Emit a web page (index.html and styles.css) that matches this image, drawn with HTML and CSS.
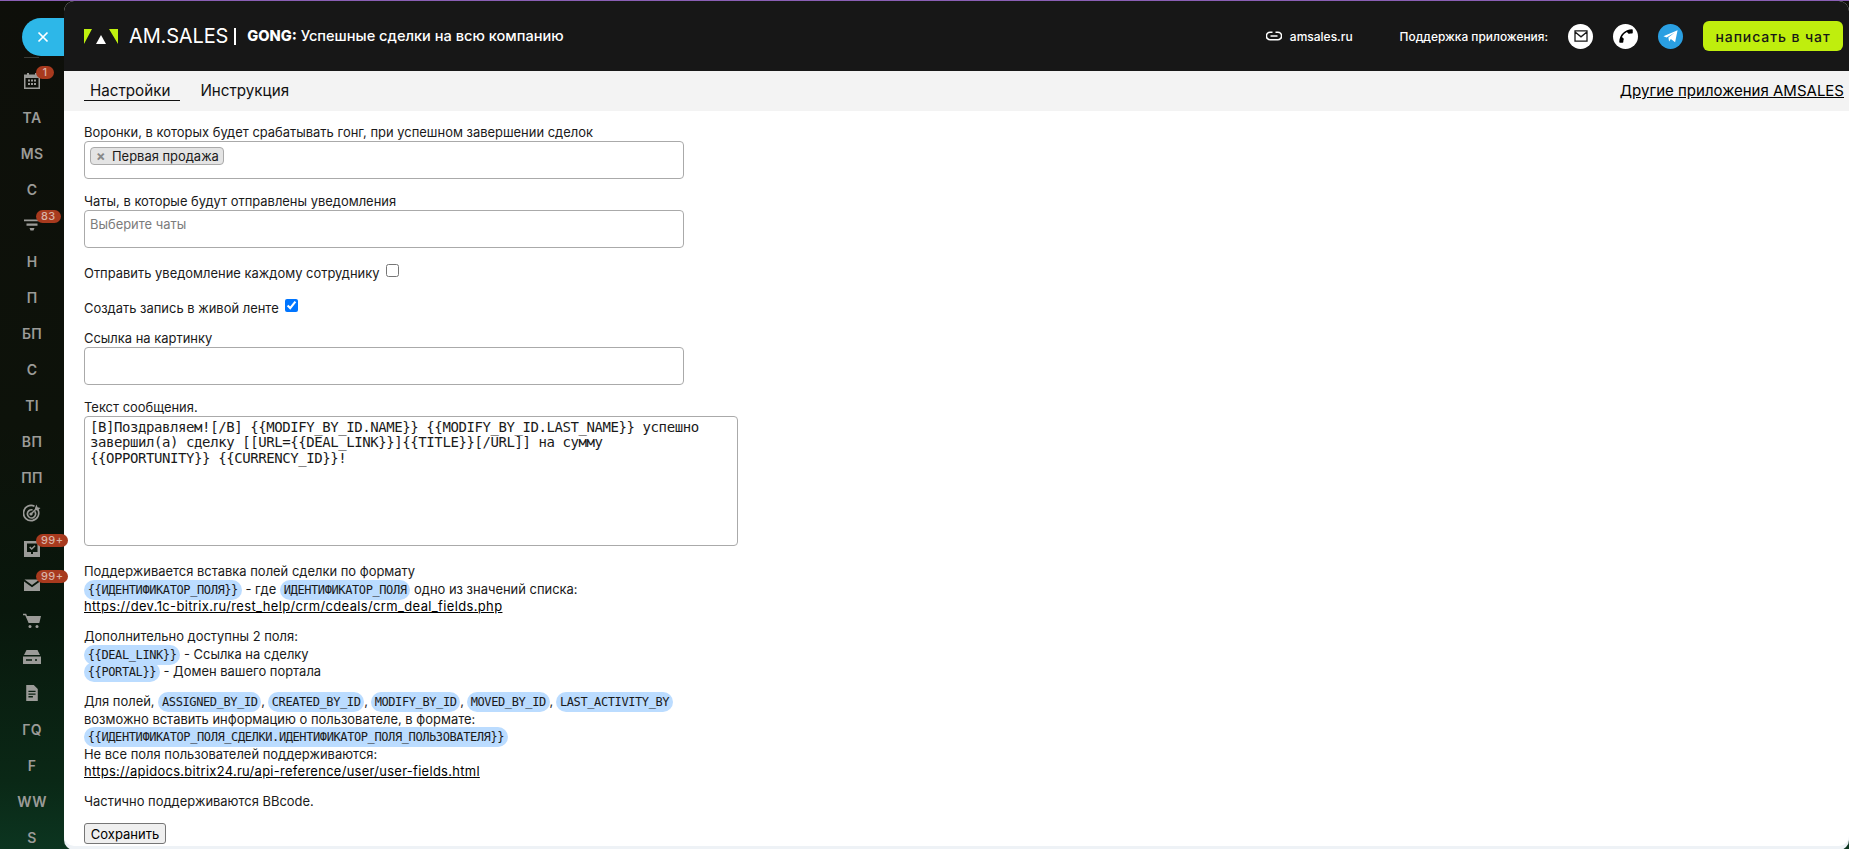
FILE: index.html
```html
<!DOCTYPE html>
<html lang="ru">
<head>
<meta charset="utf-8">
<title>AM.SALES GONG</title>
<link rel="stylesheet" href="styles.css">
</head>
<body>
<aside class="sidebar">
  <button class="close-btn" type="button" aria-label="Закрыть"><svg class="close-icon" viewBox="0 0 12 12"><path d="M1.500 1.500l9 9M10.500 1.500l-9 9"/></svg></button>
  <div class="side-divider"></div>
  <ul class="side-list">
    <li class="side-item"><svg class="side-icon" viewBox="0 0 16 16"><path fill-rule="evenodd" d="M3 0h2v1.500h6V0h2v1.500h3V16H0V1.500h3zM1.500 5v9.500h13V5zM4 6.500h2v2H4zM7 6.500h2v2H7zM10 6.500h2v2h-2zM4 10h2v2H4zM7 10h2v2H7zM10 10h2v2h-2z"/></svg><span class="badge">1</span></li>
    <li class="side-item">TA</li>
    <li class="side-item">MS</li>
    <li class="side-item">C</li>
    <li class="side-item"><svg class="side-icon" viewBox="0 0 16 16"><path d="M0 2.500h16v1.800H0zM2.500 6.500h11v2.200h-11zM5.500 11h5l-1 2.500h-3z"/></svg><span class="badge">83</span></li>
    <li class="side-item">Н</li>
    <li class="side-item">П</li>
    <li class="side-item">БП</li>
    <li class="side-item">С</li>
    <li class="side-item">TI</li>
    <li class="side-item">ВП</li>
    <li class="side-item">ПП</li>
    <li class="side-item"><svg class="side-icon side-icon-target" viewBox="0 0 18 18"><path fill="none" stroke-width="1.700" d="M14.800 5.500A7.600 7.600 0 1 1 11.500 2.300M11.600 7.200a4.100 4.100 0 1 1-2.100-1.300"/><circle cx="8" cy="10" r="1.600"/><path fill="none" stroke-width="1.500" d="M8 10l5-5"/><path d="M12 4l1.500-3.500 1 2.800 3 .7-3 2.500-2.500-.5z"/></svg></li>
    <li class="side-item"><svg class="side-icon" viewBox="0 0 16 16"><path fill-rule="evenodd" d="M0 0h16v16H0zM3 2.500V11h4v2h2v-2h4.500V2.500z"/><path d="M5.200 6.600l1-1 1.500 1.500 2.800-2.800 1 1-3.800 3.800z"/></svg><span class="badge">99+</span></li>
    <li class="side-item"><svg class="side-icon" viewBox="0 0 16 16"><path d="M.5 2.500h15L8 8zM0 4.500l8 5.800 8-5.800V14H0z"/></svg><span class="badge">99+</span></li>
    <li class="side-item"><svg class="side-icon side-icon-cart" viewBox="0 0 18 16"><path d="M0 .8h3.200l.8 2.200H18l-1.700 7H5.600L2.200 2.300H0z"/><circle cx="7" cy="13.500" r="1.500"/><circle cx="14" cy="13.500" r="1.500"/></svg></li>
    <li class="side-item"><svg class="side-icon side-icon-drive" viewBox="0 0 18 14"><path fill-rule="evenodd" d="M3.500 0h11L17 5H1zM0 6.500h18V14H0zM3 9.200v1.600h6V9.200zM12 9.200v1.600h2V9.200z"/></svg></li>
    <li class="side-item"><svg class="side-icon" viewBox="0 0 16 18"><path fill-rule="evenodd" d="M1.500 0H10l4.500 4.500V18h-13zM4 6.500V8h8V6.500zM4 9.500V11h8V9.500zM4 12.500V14h5v-1.500z"/></svg></li>
    <li class="side-item">ГQ</li>
    <li class="side-item">F</li>
    <li class="side-item">WW</li>
    <li class="side-item">S</li>
  </ul>
</aside>
<main class="panel">
  <header class="topbar">
    <div class="brand">
      <svg class="logo" viewBox="0 0 34 15"><path class="logo-lime" d="M0 0h8L0 15zM25 0h9v15z"/><path class="logo-white" d="M17 6l5 9H12z"/></svg>
      <span class="brand-name">AM.SALES</span>
      <span class="brand-sep"></span>
      <span class="brand-title"><b>GONG:</b> Успешные сделки на всю компанию</span>
    </div>
    <div class="top-actions">
      <a class="site-link"><svg class="link-icon" viewBox="0 0 16 10"><path d="M6.500 1.200H4.200a3.800 3.800 0 0 0 0 7.600h7.600a3.800 3.800 0 0 0 0-7.600H9.500M4.500 5h7"/></svg>amsales.ru</a>
      <span class="support-label">Поддержка приложения:</span>
      <span class="round-icon"><svg viewBox="0 0 16 14" class="mail-icon"><path d="M1 1h14v12H1zM1.500 2.500L8 8l6.500-5.500"/></svg></span>
      <span class="round-icon"><svg viewBox="0 0 24 24" class="phone-icon"><path transform="rotate(90 12 12)" d="M6.600 10.800c1.400 2.800 3.800 5.100 6.600 6.600l2.200-2.200c.3-.3.700-.4 1-.2 1.100.4 2.300.6 3.600.6.600 0 1 .4 1 1V20c0 .6-.4 1-1 1C10.600 21 3 13.400 3 4c0-.6.4-1 1-1h3.500c.6 0 1 .4 1 1 0 1.300.2 2.500.6 3.600.1.300 0 .7-.2 1z"/></svg></span>
      <span class="round-icon round-icon-tg"><svg viewBox="0 0 24 24" class="tg-icon"><path d="M2 11.500L22 3l-3.500 17-6-4.500-2.500 3.500-1-5.500L18 6.500 6.500 13.500z"/></svg></span>
      <button class="chat-btn" type="button">написать в чат</button>
    </div>
  </header>
  <nav class="tabs">
    <div class="tab-group">
      <a class="tab tab-active">Настройки</a>
      <a class="tab">Инструкция</a>
    </div>
    <a class="other-apps">Другие приложения AMSALES</a>
  </nav>
  <form class="content">
    <div class="field">
      <label class="label">Воронки, в которых будет срабатывать гонг, при успешном завершении сделок</label>
      <div class="select-box"><span class="tag"><span class="tag-x">×</span>Первая продажа</span></div>
    </div>
    <div class="field">
      <label class="label">Чаты, в которые будут отправлены уведомления</label>
      <div class="select-box"><span class="placeholder">Выберите чаты</span></div>
    </div>
    <label class="check-row">Отправить уведомление каждому сотруднику <input class="check" type="checkbox"></label>
    <label class="check-row check-row-last">Создать запись в живой ленте <input class="check" type="checkbox" checked></label>
    <div class="field">
      <label class="label">Ссылка на картинку</label>
      <input class="text-input" type="text">
    </div>
    <div class="field">
      <label class="label">Текст сообщения.</label>
      <textarea class="message" spellcheck="false">[B]Поздравляем![/B] {{MODIFY_BY_ID.NAME}} {{MODIFY_BY_ID.LAST_NAME}} успешно завершил(а) сделку [[URL={{DEAL_LINK}}]{{TITLE}}[/URL]] на сумму {{OPPORTUNITY}} {{CURRENCY_ID}}!</textarea>
    </div>
    <div class="help">
      <p>Поддерживается вставка полей сделки по формату<br>
      <code>{{ИДЕНТИФИКАТОР_ПОЛЯ}}</code> - где <code>ИДЕНТИФИКАТОР_ПОЛЯ</code> одно из значений списка:<br>
      <a class="doc-link doc-link-wide">https://dev.1c-bitrix.ru/rest_help/crm/cdeals/crm_deal_fields.php</a></p>
      <p>Дополнительно доступны 2 поля:<br>
      <code>{{DEAL_LINK}}</code> - Ссылка на сделку<br>
      <code>{{PORTAL}}</code> - Домен вашего портала</p>
      <p>Для полей, <code>ASSIGNED_BY_ID</code><span class="comma">, </span><code>CREATED_BY_ID</code><span class="comma">, </span><code>MODIFY_BY_ID</code><span class="comma">, </span><code>MOVED_BY_ID</code><span class="comma">, </span><code>LAST_ACTIVITY_BY</code><br>
      возможно вставить информацию о пользователе, в формате:<br>
      <code>{{ИДЕНТИФИКАТОР_ПОЛЯ_СДЕЛКИ.ИДЕНТИФИКАТОР_ПОЛЯ_ПОЛЬЗОВАТЕЛЯ}}</code><br>
      Не все поля пользователей поддерживаются:<br>
      <a class="doc-link">https://apidocs.bitrix24.ru/api-reference/user/user-fields.html</a></p>
      <p>Частично поддерживаются BBcode.</p>
    </div>
    <button class="save-btn" type="button">Сохранить</button>
  </form>
</main>
</body>
</html>
```
FILE: styles.css
```css
* { box-sizing: border-box; }
html, body { height: 100%; }
body {
  margin: 0;
  height: 849px;
  overflow: hidden;
  display: flex;
  border-top: 1px solid #8a5fb5;
  background: linear-gradient(180deg, #0e0f0a 0%, #0d120a 50%, #09170c 72%, #0a2816 92%, #0c3520 100%);
  font-family: Inter, "Noto Sans", sans-serif;
  font-size: 12.950px;
  color: #1a1a1a;
}
.sidebar {
  width: 64px;
  flex: none;
  padding-top: 17px;
}
.close-btn {
  display: flex;
  align-items: center;
  justify-content: center;
  width: 42px;
  height: 38px;
  margin-left: 22px;
  padding: 0;
  border: 0;
  border-radius: 19px 0 0 19px;
  background: #2db7e8;
}
.close-icon { width: 12px; height: 12px; fill: none; stroke: #fff; stroke-width: 1.700; }
.side-divider { width: 15px; height: 1px; margin: 1px 0 0 24px; background: #3a3a34; }
.side-list { list-style: none; margin: 5px 0 0; padding: 0; }
.side-item {
  position: relative;
  display: flex;
  align-items: center;
  justify-content: center;
  height: 36px;
  color: #9b9b98;
  font-size: 14px;
  font-weight: 600;
  letter-spacing: .3px;
}
.side-icon { width: 16px; height: 16px; fill: #9b9b98; stroke: #9b9b98; stroke-width: 0; }
.side-icon-target { width: 18px; height: 18px; }
.side-icon-cart { width: 18px; height: 16px; }
.side-icon-drive { width: 18px; height: 14px; }
.side-icon-target path[fill="none"] { stroke: #9b9b98; }
.badge {
  position: absolute;
  left: 36px;
  top: 3px;
  min-width: 18px;
  height: 13px;
  padding: 0 5px;
  border-radius: 7px;
  background: #a83a1e;
  color: #d9b4a8;
  font-size: 11px;
  font-weight: 500;
  line-height: 13px;
  text-align: center;
  letter-spacing: .4px;
}
.panel {
  flex: 1;
  min-width: 0;
  height: 845px;
  display: flex;
  flex-direction: column;
  background: #fff;
  border-radius: 10px;
  box-shadow: 0 4px 0 #eef2f6;
  overflow: hidden;
}
.topbar {
  display: flex;
  flex: none;
  align-items: center;
  justify-content: space-between;
  height: 70px;
  padding: 0 6px 0 20px;
  background: #171717;
  color: #fff;
}
.brand { display: flex; align-items: center; }
.logo { width: 34px; height: 15px; margin-right: 11px; }
.logo-lime { fill: #bff00f; }
.logo-white { fill: #fff; }
.brand-name { font-size: 20px; font-weight: 400; line-height: 24px; letter-spacing: -.15px; }
.brand-sep { width: 2px; height: 17px; margin: 0 11px 0 6px; background: #fff; }
.brand-title { font-size: 14.600px; font-weight: 500; }
.brand-title b { font-weight: 800; }
.top-actions { display: flex; align-items: center; }
.site-link { display: flex; align-items: center; font-size: 12px; font-weight: 500; margin-right: 47px; }
.link-icon { width: 16px; height: 10px; margin-right: 8px; fill: none; stroke: #fff; stroke-width: 1.600; }
.support-label { font-size: 11.900px; font-weight: 500; margin-right: 20px; }
.round-icon {
  display: flex;
  align-items: center;
  justify-content: center;
  width: 25px;
  height: 25px;
  margin-right: 20px;
  border-radius: 50%;
  background: #fff;
}
.round-icon-tg { background: #2a9fe2; }
.mail-icon { width: 14px; height: 12px; fill: none; stroke: #171717; stroke-width: 1.500; }
.phone-icon { width: 18px; height: 18px; fill: #000; }
.tg-icon { width: 17px; height: 17px; fill: #fff; }
.chat-btn {
  width: 140px;
  height: 30px;
  padding: 0;
  border: 0;
  border-radius: 6px;
  background: #bfee0d;
  color: #171717;
  font-family: inherit;
  font-size: 14px;
  font-weight: 500;
  letter-spacing: .9px;
}
.tabs {
  display: flex;
  flex: none;
  align-items: flex-start;
  justify-content: space-between;
  height: 40px;
  padding: 0 5px 0 20px;
  background: #f3f3f3;
}
.tab-group { display: flex; gap: 20px; }
.tab {
  display: block;
  height: 25px;
  margin-top: 5px;
  padding: 4px 10px 0 6px;
  color: #111;
  font-size: 15.200px;
  line-height: 21px;
}
.tab + .tab { padding: 4px 0 0; }
.tab-active { border-bottom: 1px solid #111; }
.other-apps { margin-top: 9px; color: #000; font-size: 15px; line-height: 21px; text-decoration: underline; }
.content { padding: 13px 0 0 20px; }
.field { margin-bottom: 14px; }
.label { display: block; height: 17px; line-height: 17px; }
.select-box, .text-input {
  display: block;
  width: 600px;
  height: 38px;
  padding: 5px;
  border: 1px solid #aaa;
  border-radius: 4px;
  background: #fff;
}
.tag {
  display: inline-flex;
  align-items: center;
  height: 18px;
  width: 134px;
  border: 1px solid #aaa;
  border-radius: 4px;
  background: #e4e4e4;
  line-height: 16px;
  white-space: nowrap;
}
.tag-x { width: 21px; padding-left: 5px; color: #888; font-size: 14px; font-weight: 700; }
.placeholder { display: block; color: #7c7c7c; line-height: 17px; }
.check-row { display: block; height: 18px; line-height: 18px; margin: 16px 0 17px; }
.check-row-last { margin-bottom: 13px; }
.check { width: 13px; height: 13px; margin: 0 0 0 3px; vertical-align: 1px; }
.message {
  display: block;
  width: 654px;
  height: 130px;
  padding: 3px 30px 3px 5px;
  border: 1px solid #aaa;
  border-radius: 4px;
  resize: none;
  color: #1a1a1a;
  font-family: "DejaVu Sans Mono", monospace;
  font-size: 14px;
  letter-spacing: -.42px;
  line-height: 15.300px;
}
.help { line-height: 17.500px; padding-top: 3px; }
.help p { margin: 0 0 12.500px; }
code {
  padding: 3px 3.800px;
  border-radius: 10px;
  background: #bbdcff;
  font-family: "DejaVu Sans Mono", monospace;
  font-size: 12px;
  letter-spacing: -.40px;
  line-height: 1;
}
.comma { letter-spacing: -.4px; }
.doc-link { color: #000; letter-spacing: .3px; text-decoration: underline; }
.doc-link-wide { letter-spacing: .38px; }
.save-btn {
  display: block;
  width: 82px;
  height: 21px;
  padding: 0;
  border: 1px solid #767676;
  border-radius: 3px;
  background: #efefef;
  color: #000;
  font-family: inherit;
  font-size: 13px;
}
```
